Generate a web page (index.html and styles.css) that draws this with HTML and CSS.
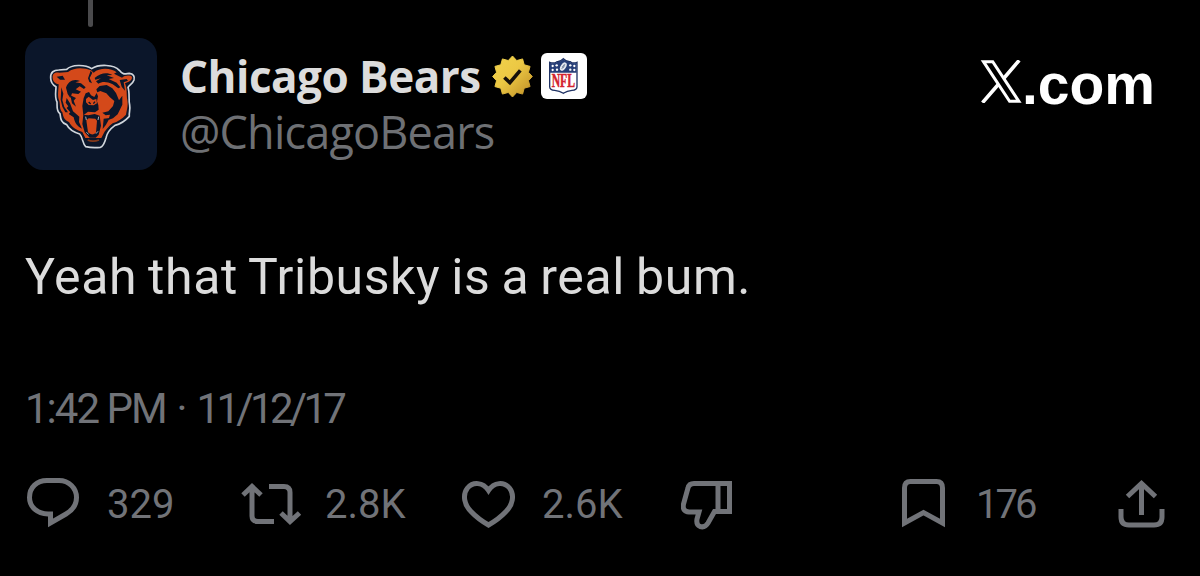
FILE: index.html
```html
<!DOCTYPE html>
<html lang="en">
<head>
    <meta charset="UTF-8">
    <meta name="viewport" content="width=device-width, initial-scale=1.0">
    <title>Chicago Bears on X</title>
    <link rel="stylesheet" href="styles.css">
</head>
<body>
    <div class="thread-line"></div>
    <div class="tweet">
        <div class="header">
            <svg class="avatar" viewBox="75 114 396 396">
                <path fill="#0b162a" stroke="#d0d5db" stroke-width="5" stroke-linejoin="round" d="M152 234C151 216 162 210 176 210L200 208C214 194 254 192 275 206C296 192 342 193 358 211C369 226 376 221 388 220C400 221 405 230 402 240C398 252 388 255 384 262C390 280 385 298 389 315C392 332 386 337 388 349C377 361 366 371 345 376C331 386 321 398 318 414C314 428 310 440 301 442Q278 445 257 440C248 432 248 411 239 402C222 397 208 390 200 374C183 369 182 356 180 341C168 333 172 318 171 306C163 291 168 274 168 260C157 254 152 247 152 234Z"/>
                <path fill="#d4491a" d="M158 234C157 221 164 217 177 218L204 216C224 200 254 203 273 211L281 218C299 202 334 204 350 217L342 221L366 233C373 227 383 225 393 228C400 232 394 244 382 247L375 250C382 266 379 284 382 300C385 318 380 332 378 344C366 358 353 364 338 370C325 380 315 392 309 404L304 414H256L247 396C231 391 216 383 207 366C194 362 190 352 187 337C178 328 181 315 178 303C171 289 176 268 176 253C164 250 159 244 158 234Z"/>
                <g fill="#0b162a">
                    <path d="M170 230L188 227L195 239L180 239Z"/>
                    <path d="M198 263C204 244 221 234 240 243L226 247L243 250L257 262L252 267L239 259L227 268L243 275L235 282L216 280L211 294L203 282Z"/>
                    <path d="M184 262L190 281L187 300L193 321L204 337L196 337L187 320L182 299Z"/>
                    <path d="M200 294L210 310L219 334L238 350L237 366L246 386C232 380 224 368 221 352L206 342L211 337L200 324L205 319L197 308Z"/>
                    <path d="M272 212L277 218L269 234L276 250L268 246L264 235Z"/>
                    <path d="M284 234C300 219 322 216 337 225L320 226L342 234L326 237L350 248L361 262L355 265L338 253C320 244 306 245 295 251L288 244L303 235L286 239Z"/>
                    <path d="M289 268L299 258L320 255L337 265L348 279L357 301L367 287L367 314L353 343L339 355L325 360L330 344L317 346L307 338L325 334L339 318L343 303L329 291L319 280L301 273L292 277Z"/>
                    <path d="M359 240L380 237L384 242L371 247L375 272L365 260Z"/>
                    <path d="M257 280L267 276L273 286L283 291L290 279L294 289L291 304L295 315L296 329L285 337L264 335L250 346L247 318L251 294Z"/>
                    <path d="M250 344L265 346L284 342L299 347L303 377L296 404L287 413H269L254 397L247 372Z"/>
                    <path d="M311 356L329 354L318 374L308 387Z"/>
                    <path d="M211 286L228 294L221 302L228 320L216 310Z"/>
                    <path d="M257 416L278 420L304 414L299 432Q278 438 260 431Z"/>
                </g>
                <path fill="#d4491a" d="M259 361L266 355L286 356L291 362L288 398Q276 409 264 397Z"/>
                <path fill="#d4491a" d="M258 297L266 290L279 300L289 297L291 310L281 316L266 315L258 307Z"/>
                <path fill="none" stroke="#0b162a" stroke-width="4" d="M266 306L272 312M285 305L280 311"/>
                <path fill="none" stroke="#a9aeb5" stroke-width="3" d="M257 350L259 360M296 350L294 360M259 397L266 403M294 394L288 401"/>
                <path fill="none" stroke="#843819" stroke-width="5" d="M263 420Q278 427 297 420"/>
            </svg>
            <div class="names">
                <div class="name-row">
                    <span class="name">Chicago Bears</span>
                    <svg class="verified" viewBox="-63 -65 126 130">
                        <defs>
                            <linearGradient id="gold" x1="0" y1="0" x2="1" y2="1">
                                <stop offset="0" stop-color="#f0d34c"/>
                                <stop offset="0.45" stop-color="#ecc844"/>
                                <stop offset="1" stop-color="#bd8c25"/>
                            </linearGradient>
                        </defs>
                        <path fill="url(#gold)" stroke="url(#gold)" stroke-width="3" stroke-linejoin="round" d="M0-63L13-49L31-54L36-36L54-31L49-13L61 0L49 13L54 31L36 36L31 54L13 49L0 63L-13 49L-31 54L-36 36L-54 31L-49 13L-61 0L-49-13L-54-31L-36-36L-31-54L-13-49Z"/>
                        <path fill="none" stroke="#15100a" stroke-width="11" d="M-25 3L-8 19L24-19"/>
                    </svg>
                    <svg class="nfl" viewBox="183 39 138 138">
                        <path fill="#fff" stroke="#1f3264" stroke-width="4" d="M209 67Q222 72 231 65Q240 66 250 56Q260 66 271 65Q279 72 291 67V140Q291 150 276 151Q261 152 250 160Q239 152 224 151Q209 150 209 140Z"/>
                        <path fill="#263e78" d="M210 68Q222 72 232 66Q241 67 250 58Q260 67 270 66Q279 72 290 68V98H210Z"/>
                        <g fill="#fff">
                            <circle cx="218" cy="78" r="3.500"/>
                            <circle cx="230" cy="76" r="3.500"/>
                            <circle cx="218" cy="90" r="3.500"/>
                            <circle cx="231" cy="89" r="3.500"/>
                            <circle cx="271" cy="76" r="3.500"/>
                            <circle cx="283" cy="78" r="3.500"/>
                            <circle cx="271" cy="89" r="3.500"/>
                            <circle cx="283" cy="90" r="3.500"/>
                        </g>
                        <ellipse cx="250" cy="80" rx="8" ry="14" fill="#e2e6ee" transform="rotate(32 250 80)"/>
                        <path fill="none" stroke="#526487" stroke-width="2" d="M245 87L255 72M246 79L252 83M249 75L255 79"/>
                        <text class="nfl-text" x="215" y="141" textLength="70" lengthAdjust="spacingAndGlyphs">NFL</text>
                    </svg>
                </div>
                <div class="handle">@ChicagoBears</div>
            </div>
            <div class="brand">
                <svg class="x-logo" viewBox="0 0 126 130">
                    <path fill="none" stroke="#fff" stroke-width="9" d="M10 5H38L117 125H89Z"/>
                    <path fill="none" stroke="#fff" stroke-width="11" d="M118 1L71 56M54 75L7 129"/>
                </svg>
                <span class="brand-text">.com</span>
            </div>
        </div>

        <div class="text">Yeah that Tribusky is a real bum.</div>
        <div class="date"><span class="time">1:42 PM</span><span class="dot">·</span><span class="day">11/12/17</span></div>

        <div class="actions">
            <div class="action reply">
                <svg width="54" height="56" viewBox="0 0 54 56">
                    <path d="M22 39C11 38.500 3.500 32 3.500 22.500C3.500 12 11 5.500 21 5.500H33C43 5.500 50.500 13 50.500 22.500C50.500 30 47 35 40 39L24.500 48V39Z"/>
                </svg>
                <span>329</span>
            </div>
            <div class="action retweet">
                <svg width="61" height="56" viewBox="0 0 61 56">
                    <path d="M2 20L11 11.500L20 20M11 12V41Q11 46.500 17 46.500H33M28 11.500H43Q49 11.500 49 17.500V46M40 38L49 46.500L58.500 38"/>
                </svg>
                <span>2.8K</span>
            </div>
            <div class="action like">
                <svg width="56" height="56" viewBox="0 0 56 56">
                    <path d="M27.500 15.500C22 7 12 6.500 6.500 13C1 20 3.500 30 10 36.500Q17 44 27.500 50Q38 44 45 36.500C51.500 30 54 20 48.500 13C43 6.500 33 7 27.500 15.500Z"/>
                </svg>
                <span>2.6K</span>
            </div>
            <div class="action dislike">
                <svg width="54" height="60" viewBox="1 2 54 60">
                    <path d="M38 10.500H14Q9 10.500 8 15L3.500 31Q2 38.500 9 39H19L17 46Q16 52 20 53.500Q25 55 28 50L34.500 38.500H38M38 10.500H49.500V38.500H38Z"/>
                </svg>
            </div>
            <div class="action bookmark">
                <svg width="45" height="56" viewBox="0 0 45 56">
                    <path d="M3.500 48V13Q3.500 6.500 9.500 6.500H35.500Q41.500 6.500 41.500 13V48L22.500 37.500Z"/>
                </svg>
                <span>176</span>
            </div>
            <div class="action share">
                <svg width="50" height="56" viewBox="0 0 50 56">
                    <path d="M10.500 21.500L24.500 8.500L38.500 21.500M24.500 9V40M4 34V42Q4 50 12 50H37Q45 50 45 42V34"/>
                </svg>
            </div>
        </div>
    </div>
</body>
</html>
```
FILE: styles.css
```css
body {
    font-family: Roboto, sans-serif;
    margin: 0;
    background-color: #000;
    color: #dcdcdc;
    height: 576px;
    overflow: hidden;
}
.thread-line {
    width: 5px;
    height: 27px;
    margin-left: 88px;
    background-color: #4a4a4c;
    border-radius: 0 0 3px 3px;
}
.tweet {
    padding: 11px 0 0 25px;
    white-space: nowrap;
}
.header {
    display: flex;
}
.avatar {
    width: 132px;
    height: 132px;
    border-radius: 18px;
    background-color: #0b162a;
}
.names {
    padding-left: 23px;
    width: 823px;
    box-sizing: border-box;
    font-family: "Open Sans", sans-serif;
}
.name-row {
    display: flex;
    align-items: center;
    height: 76px;
}
.name {
    width: 312px;
    font-size: 44px;
    font-weight: 700;
    letter-spacing: -0.5px;
}
.verified {
    width: 41px;
    height: 43px;
}
.nfl {
    width: 46px;
    height: 46px;
    margin-left: 8px;
    border-radius: 6px;
    background-color: #fff;
}
.nfl-text {
    font-family: "Liberation Serif", serif;
    font-size: 54px;
    font-weight: 700;
    fill: #d3232d;
    stroke: #d3232d;
    stroke-width: 1.5px;
}
.handle {
    font-size: 45px;
    line-height: 36px;
    letter-spacing: -0.8px;
    color: #6e7074;
}
.brand {
    display: flex;
    padding-top: 22px;
}
.x-logo {
    width: 42px;
    height: 43px;
}
.brand-text {
    font-family: "Liberation Sans", sans-serif;
    font-size: 57px;
    font-weight: 700;
    line-height: 48px;
    color: #fff;
}
.text {
    margin-top: 77px;
    font-size: 50px;
    line-height: 60px;
    letter-spacing: 0.6px;
    word-spacing: -2px;
}
.date {
    margin-top: 72px;
    font-size: 42px;
    line-height: 60px;
    color: #717378;
}
.time {
    letter-spacing: -2px;
}
.dot {
    margin: 0 9px 0 11px;
}
.day {
    letter-spacing: -3.7px;
}
.actions {
    display: grid;
    grid-template-columns: 215px 220px 220px 220px 216px 60px;
    padding-left: 1px;
    margin-top: 36px;
    font-size: 40px;
    line-height: 60px;
    color: #717378;
}
.action {
    display: flex;
}
.action svg {
    fill: none;
    stroke: #717378;
    stroke-width: 5;
}
.reply span {
    margin-left: 27px;
}
.retweet span {
    margin-left: 23px;
}
.like span {
    margin-left: 25px;
}
.bookmark span {
    margin-left: 30px;
    letter-spacing: -3px;
}
```
